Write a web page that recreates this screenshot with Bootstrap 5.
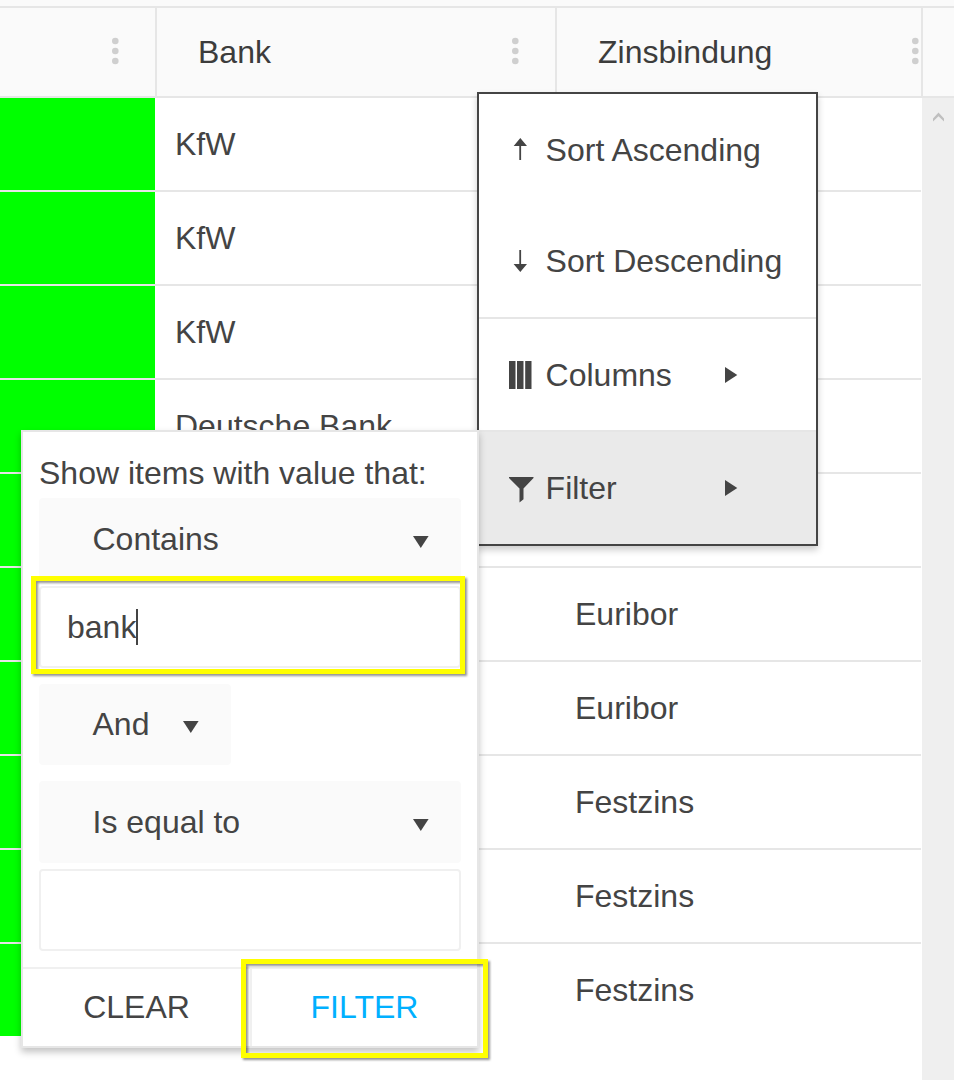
<!DOCTYPE html>
<html lang="en">
<head>
<meta charset="utf-8">
<meta name="viewport" content="width=device-width, initial-scale=1">
<title>Grid column menu</title>
<link href="https://cdn.jsdelivr.net/npm/bootstrap@5.3.0/dist/css/bootstrap.min.css" rel="stylesheet">
<style>
body{font-family:"Liberation Sans",Arial,sans-serif;font-size:32px;line-height:40px;color:#444;background:#fff;height:1080px;overflow:hidden}
.g-strip{height:8px;background:#fafafa;border-bottom:2px solid #e6e6e6}
.g-head{height:90px;background:#fafafa;border-bottom:2px solid #e6e6e6;color:#3c3c3c}
.c-status{width:155px}
.c-bank{width:400px}
.c-rate{width:366px}
.g-head .c-bank,.g-head .c-rate,.g-head .c-end{border-left:2px solid #e6e6e6}
.g-head .c-bank,.g-head .c-rate{padding-left:41px}
.g-head .c-end{width:33px}
.g-head svg{margin:0 36px 2px 0}
.g-head .c-rate svg{margin-right:2px}
.g-body{height:982px}
.g-rows{width:921px}
.g-row{height:94px;border-bottom:2px solid #e6e6e6}
.g-row:last-child{height:92px;border-bottom:0}
.g-row .c-status{background:#0f0}
.g-row .c-bank,.g-row .c-rate{padding:0 0 0 20px}
.g-scroll{width:32px;background:#efefef;padding-top:13px}
.col-menu{left:477px;top:92px;width:341px;height:454px;border:2px solid #444;background:#fff;box-shadow:0 4px 7px rgba(0,0,0,.2)}
.m-item{padding-left:28px}
.m-item svg{width:28px;height:32px;margin-right:10.6px;flex:none}
.m-item .m-arrow{width:14px;height:16px;margin-right:0}
.m-label{width:178.4px}
.m-line{border-top:2px solid #e6e6e6}
.filter-panel{left:21px;top:430px;width:458px;height:618px;border:2px solid #e6e6e6;background:#fff;box-shadow:0 4px 7px rgba(0,0,0,.24)}
.f-title{height:66px;padding-top:16px}
.f-pick{background:#fafafa;border-radius:4px;height:82px;padding:0 32px 0 53.500px}
.f-pick svg{margin-top:5px}
.f-field{height:82px;border:2px solid #f0f0f0;border-radius:4px;padding-left:26px;background:#fff}
.f-caret{width:2px;height:36px;background:#444}
.f-foot{height:79px;border-top:2px solid #f0f0f0}
.f-foot button{color:#444;background:none;border:0;padding:0 0 2px;width:50%}
.f-foot button.f-apply{color:#00b0ff}
.f-foot button+button{border-left:2px solid #f0f0f0}
.hl{border:5px solid #ff0;filter:drop-shadow(2px 2px 1px rgba(0,0,0,.42));pointer-events:none}
.hl-value{left:31px;top:576px;width:434px;height:98px}
.hl-apply{left:241px;top:959px;width:247px;height:99px}
</style>
</head>
<body class="position-relative">
<svg class="d-none">
  <symbol id="dots" viewBox="0 0 8 28"><circle cx="4.300" cy="4" r="3.3"/><circle cx="4.300" cy="14" r="3.3"/><circle cx="4.300" cy="24" r="3.3"/></symbol>
  <symbol id="down" viewBox="0 0 16 12"><path d="M0 0h15.600L7.800 12z"/></symbol>
  <symbol id="right" viewBox="0 0 14 16"><path d="M1 0v16l12.300-8z"/></symbol>
</svg>

<div class="g-strip"></div>
<header class="g-head d-flex">
  <div class="c-status d-flex align-items-center justify-content-end"><svg width="8" height="28" fill="#cfcfcf"><use href="#dots"/></svg></div>
  <div class="c-bank d-flex align-items-center justify-content-between"><span>Bank</span><svg width="8" height="28" fill="#cfcfcf"><use href="#dots"/></svg></div>
  <div class="c-rate d-flex align-items-center justify-content-between"><span>Zinsbindung</span><svg width="8" height="28" fill="#cfcfcf"><use href="#dots"/></svg></div>
  <div class="c-end"></div>
</header>

<div class="g-body d-flex">
  <main class="g-rows">
    <div class="g-row d-flex"><div class="c-status"></div><div class="c-bank d-flex align-items-center">KfW</div><div class="c-rate"></div></div>
    <div class="g-row d-flex"><div class="c-status"></div><div class="c-bank d-flex align-items-center">KfW</div><div class="c-rate"></div></div>
    <div class="g-row d-flex"><div class="c-status"></div><div class="c-bank d-flex align-items-center">KfW</div><div class="c-rate"></div></div>
    <div class="g-row d-flex"><div class="c-status"></div><div class="c-bank d-flex align-items-center">Deutsche Bank</div><div class="c-rate"></div></div>
    <div class="g-row d-flex"><div class="c-status"></div><div class="c-bank"></div><div class="c-rate"></div></div>
    <div class="g-row d-flex"><div class="c-status"></div><div class="c-bank"></div><div class="c-rate d-flex align-items-center">Euribor</div></div>
    <div class="g-row d-flex"><div class="c-status"></div><div class="c-bank"></div><div class="c-rate d-flex align-items-center">Euribor</div></div>
    <div class="g-row d-flex"><div class="c-status"></div><div class="c-bank"></div><div class="c-rate d-flex align-items-center">Festzins</div></div>
    <div class="g-row d-flex"><div class="c-status"></div><div class="c-bank"></div><div class="c-rate d-flex align-items-center">Festzins</div></div>
    <div class="g-row d-flex"><div class="c-status"></div><div class="c-bank"></div><div class="c-rate d-flex align-items-center">Festzins</div></div>
  </main>
  <aside class="g-scroll ms-auto d-flex justify-content-center align-items-start"><svg width="12" height="11" fill="#bfbfbf"><path d="M1 7.500 6.500 1.500 12 7.500v3L6.500 5.300 1 10.500z"/></svg></aside>
</div>

<div class="col-menu position-absolute d-flex flex-column">
  <div class="m-item d-flex align-items-center" style="height:112px">
    <svg viewBox="0 0 28 32" fill="#444"><path d="M13.300 4l6.700 8h-5.900v14h-1.800V12H6.700z"/></svg><span>Sort Ascending</span>
  </div>
  <div class="m-item d-flex align-items-center" style="height:111px;padding-bottom:2px">
    <svg viewBox="0 0 28 32" fill="#444"><path d="M12.300 5h1.800v14H20l-6.700 8-6.700-8h5.700z"/></svg><span>Sort Descending</span>
  </div>
  <div class="m-item m-line d-flex align-items-center" style="height:113px">
    <svg viewBox="0 0 28 32" fill="#444"><path d="M2 2h6.500v28H2zM10 2h6.500v28H10zM18.200 2h6.300v28h-6.300z"/></svg><span class="m-label">Columns</span><svg class="m-arrow" fill="#444"><use href="#right"/></svg>
  </div>
  <div class="m-item m-line d-flex align-items-center flex-fill" style="background:#eaeaea">
    <svg viewBox="0 0 28 32" fill="#444"><path d="M2 5h24.500v1L16.500 16.500v10.800L12.500 30.500v-14L2 6z"/></svg><span class="m-label">Filter</span><svg class="m-arrow" fill="#444"><use href="#right"/></svg>
  </div>
</div>

<form class="filter-panel position-absolute d-flex flex-column">
  <div class="px-3 d-flex flex-column">
    <div class="f-title d-flex align-items-center text-nowrap">Show items with value that:</div>
    <div class="f-pick d-flex align-items-center justify-content-between"><span>Contains</span><svg width="16" height="12" fill="#444"><use href="#down"/></svg></div>
    <div class="f-field d-flex align-items-center" style="margin-top:6px">bank<span class="f-caret"></span></div>
    <div class="f-pick d-flex align-items-center justify-content-between" style="margin-top:16px;width:192px;height:81px;padding-bottom:1px"><span>And</span><svg width="16" height="12" fill="#444"><use href="#down"/></svg></div>
    <div class="f-pick d-flex align-items-center justify-content-between" style="margin-top:16px"><span>Is equal to</span><svg width="16" height="12" fill="#444"><use href="#down"/></svg></div>
    <div class="f-field" style="margin-top:6px"></div>
  </div>
  <div class="f-foot d-flex mt-auto"><button type="button">CLEAR</button><button type="button" class="f-apply">FILTER</button></div>
</form>

<div class="hl hl-value position-absolute"></div>
<div class="hl hl-apply position-absolute"></div>
<script src="https://cdn.jsdelivr.net/npm/bootstrap@5.3.0/dist/js/bootstrap.bundle.min.js"></script>
</body>
</html>
